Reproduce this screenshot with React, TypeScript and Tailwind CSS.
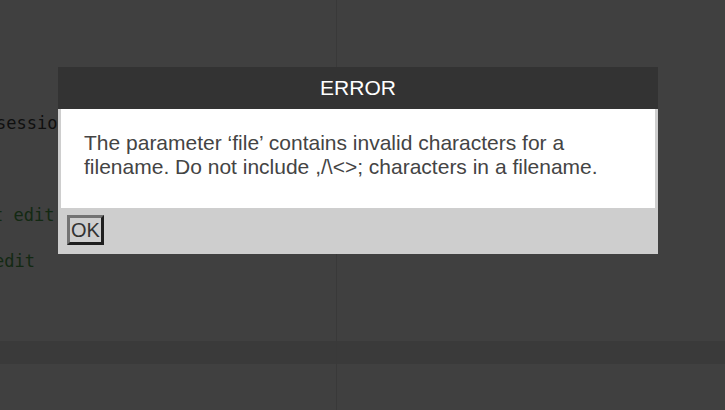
import React from "react";

const codeLines: { text: string; color: string; shift: string }[] = [
  { text: "session", color: "text-[#0f0f0f]", shift: "-ml-[4px]" },
  { text: " ", color: "", shift: "" },
  { text: " ", color: "", shift: "" },
  { text: " ", color: "", shift: "" },
  { text: "t edit", color: "text-[#132913]", shift: "-ml-[7px]" },
  { text: " ", color: "", shift: "" },
  { text: "edit", color: "text-[#132913]", shift: "-ml-[6px]" },
];

function ErrorDialog() {
  return (
    <div className="absolute left-[58px] top-[67px] w-[600px] font-['Liberation_Sans',Arial,sans-serif]">
      <div className="flex h-[42px] items-center justify-center bg-[#333333] text-[21px] text-white">
        ERROR
      </div>
      <div className="h-[99px] border-x-[3px] border-[#cecece] bg-white pl-[23px] pr-[16px] pt-[22px] text-[21px] leading-[24px] text-[#444444]">
        The parameter ‘file’ contains invalid characters for a
        <br />
        filename. Do not include ,/\&lt;&gt;; characters in a filename.
      </div>
      <div className="h-[46px] bg-[#cecece] pl-[9px] pt-[7px]">
        <button className="h-[30px] border-[3px] border-b-[#1f1f1f] border-l-[#737373] border-r-[#1f1f1f] border-t-[#737373] bg-[#cfcfcf] px-[1px] text-[20px] leading-[23px] text-[#333333]">
          OK
        </button>
      </div>
    </div>
  );
}

export default function App() {
  return (
    <div className="relative flex h-[410px] w-[725px] overflow-hidden bg-[#404040]">
      {/* editor pane (dimmed) */}
      <div className="flex w-[337px] flex-col border-r border-[#393939]">
        <div className="h-[341px] overflow-hidden pt-[112px] font-['DejaVu_Sans_Mono',monospace] text-[17px] leading-[23px]">
          {codeLines.map((line, i) => (
            <div key={i} className={`whitespace-pre ${line.color} ${line.shift}`}>
              {line.text}
            </div>
          ))}
        </div>
        <div className="h-[23px] bg-[#3a3a3a]" />
        <div className="flex-1" />
      </div>
      <div className="flex flex-1 flex-col">
        <div className="h-[341px]" />
        <div className="h-[23px] bg-[#3a3a3a]" />
        <div className="flex-1" />
      </div>

      <ErrorDialog />
    </div>
  );
}
